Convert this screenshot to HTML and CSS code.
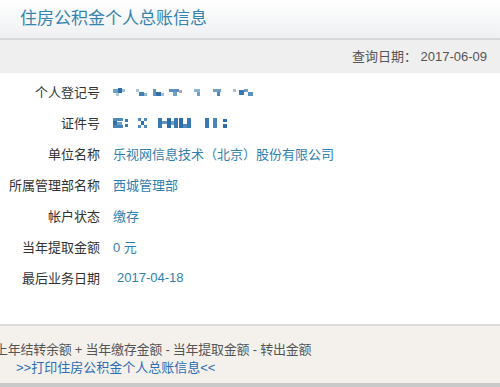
FILE: index.html
```html
<!DOCTYPE html>
<html lang="zh-CN">
<head>
  <meta charset="UTF-8">
  <title>住房公积金个人总账信息</title>
  <link rel="stylesheet" href="styles.css">
</head>
<body>
  <div class="header">住房公积金个人总账信息</div>
  <div class="query">查询日期： 2017-06-09</div>
  <div class="info">
    <div class="row">
      <div class="label">个人登记号</div>
      <div class="value">
        <!-- masked number -->
        <svg class="mask" width="146" height="12" viewBox="0 0 146 12">
          <rect x="0" y="3" width="5" height="4" fill="#6fa0c8"/>
          <rect x="5" y="2" width="4" height="5" fill="#2f6fa8"/>
          <rect x="9" y="3" width="3" height="3" fill="#9cc0dc"/>
          <rect x="3" y="7" width="3" height="3" fill="#b0cbe0"/>
          <rect x="23" y="3" width="3" height="3" fill="#a9c6df"/>
          <rect x="26" y="6" width="5" height="4" fill="#3f7fb3"/>
          <rect x="31" y="7" width="3" height="3" fill="#8fb3d3"/>
          <rect x="40" y="3" width="3" height="7" fill="#5f93c2"/>
          <rect x="43" y="6" width="5" height="4" fill="#2f6fa8"/>
          <rect x="48" y="7" width="3" height="3" fill="#a0c0dc"/>
          <rect x="56" y="3" width="10" height="3" fill="#5b8fbf"/>
          <rect x="60" y="6" width="4" height="4" fill="#6f9fc8"/>
          <rect x="66" y="4" width="3" height="3" fill="#c3a5b5"/>
          <rect x="81" y="3" width="6" height="3" fill="#8fb3d3"/>
          <rect x="84" y="6" width="3" height="4" fill="#6fa0c8"/>
          <rect x="100" y="3" width="8" height="3" fill="#6f9fc8"/>
          <rect x="104" y="6" width="3" height="4" fill="#4f87b8"/>
          <rect x="120" y="3" width="3" height="3" fill="#a0c0dc"/>
          <rect x="126" y="4" width="5" height="5" fill="#3a78b0"/>
          <rect x="131" y="3" width="4" height="3" fill="#6f9fc8"/>
          <rect x="135" y="6" width="5" height="4" fill="#5a8ec0"/>
        </svg>
      </div>
    </div>
    <div class="row">
      <div class="label">证件号</div>
      <div class="value">
        <svg class="mask" width="118" height="12" viewBox="0 0 118 12">
          <rect x="0" y="1" width="10" height="3" fill="#4f8ac0"/>
          <rect x="0" y="4" width="4" height="4" fill="#2f6fa8"/>
          <rect x="4" y="5" width="5" height="3" fill="#6fa0c8"/>
          <rect x="0" y="8" width="10" height="3" fill="#4a84bb"/>
          <rect x="12" y="2" width="3" height="3" fill="#3a78b0"/>
          <rect x="12" y="7" width="3" height="3" fill="#3a78b0"/>
          <rect x="25" y="1" width="3" height="3" fill="#4f8ac0"/>
          <rect x="31" y="1" width="3" height="3" fill="#4f8ac0"/>
          <rect x="28" y="4" width="3" height="4" fill="#2f6fa8"/>
          <rect x="25" y="8" width="3" height="3" fill="#4f8ac0"/>
          <rect x="31" y="8" width="3" height="3" fill="#4f8ac0"/>
          <rect x="45" y="1" width="4" height="10" fill="#3a78b0"/>
          <rect x="49" y="4" width="5" height="3" fill="#5f93c2"/>
          <rect x="54" y="1" width="4" height="10" fill="#2f6fa8"/>
          <rect x="58" y="4" width="3" height="4" fill="#6fa0c8"/>
          <rect x="61" y="1" width="4" height="10" fill="#3a78b0"/>
          <rect x="66" y="1" width="4" height="10" fill="#2f6fa8"/>
          <rect x="70" y="7" width="4" height="4" fill="#4f8ac0"/>
          <rect x="74" y="1" width="4" height="10" fill="#3a78b0"/>
          <rect x="92" y="1" width="4" height="10" fill="#3a78b0"/>
          <rect x="100" y="1" width="4" height="10" fill="#4a84bb"/>
          <rect x="110" y="2" width="4" height="3" fill="#2f6fa8"/>
          <rect x="110" y="7" width="4" height="4" fill="#2f6fa8"/>
        </svg>
      </div>
    </div>
    <div class="row">
      <div class="label">单位名称</div>
      <div class="value">乐视网信息技术（北京）股份有限公司</div>
    </div>
    <div class="row">
      <div class="label">所属管理部名称</div>
      <div class="value">西城管理部</div>
    </div>
    <div class="row">
      <div class="label">帐户状态</div>
      <div class="value">缴存</div>
    </div>
    <div class="row">
      <div class="label">当年提取金额</div>
      <div class="value">0 元</div>
    </div>
    <div class="row">
      <div class="label">最后业务日期</div>
      <div class="value date">2017-04-18</div>
    </div>
  </div>
  <div class="footer">
    <div class="formula">上年结转余额 + 当年缴存金额 - 当年提取金额 - 转出金额</div>
    <a class="print" href="#">&gt;&gt;打印住房公积金个人总账信息&lt;&lt;</a>
  </div>
</body>
</html>
```

FILE: styles.css
```css
body {
  margin: 0;
  font-family: "Liberation Sans", "Noto Sans CJK SC", sans-serif;
  background-color: #fff;
  overflow: hidden;
}
.header {
  height: 38px;
  line-height: 38px;
  padding-left: 20px;
  font-size: 17px;
  color: #3584ad;
  background: linear-gradient(#ffffff, #eef0f2);
  border-bottom: 2px solid #d6d8da;
}
.query {
  height: 33px;
  line-height: 33px;
  padding-right: 13px;
  text-align: right;
  font-size: 13px;
  color: #555;
  background-color: #efefef;
}
.info {
  padding-top: 3px;
  padding-bottom: 31px;
}
.row {
  display: flex;
  align-items: center;
  height: 31px;
  font-size: 13px;
}
.label {
  width: 100px;
  text-align: right;
  color: #333;
}
.value {
  display: flex;
  align-items: center;
  margin-left: 13px;
  color: #2f80ad;
}
.value.date {
  margin-left: 17px;
}
.mask {
  display: block;
  filter: blur(0.6px);
}
.footer {
  border-top: 2px solid #dcdad6;
  border-bottom: 4px solid #c9c9c9;
  background-color: #f4f1ec;
  padding: 15px 0 6px;
  font-size: 13px;
}
.formula {
  margin-left: -5px;
  letter-spacing: -0.25px;
  color: #555;
  line-height: 18px;
}
.print {
  display: block;
  margin-left: 16px;
  line-height: 18px;
  color: #2b6db6;
  text-decoration: none;
}
```
